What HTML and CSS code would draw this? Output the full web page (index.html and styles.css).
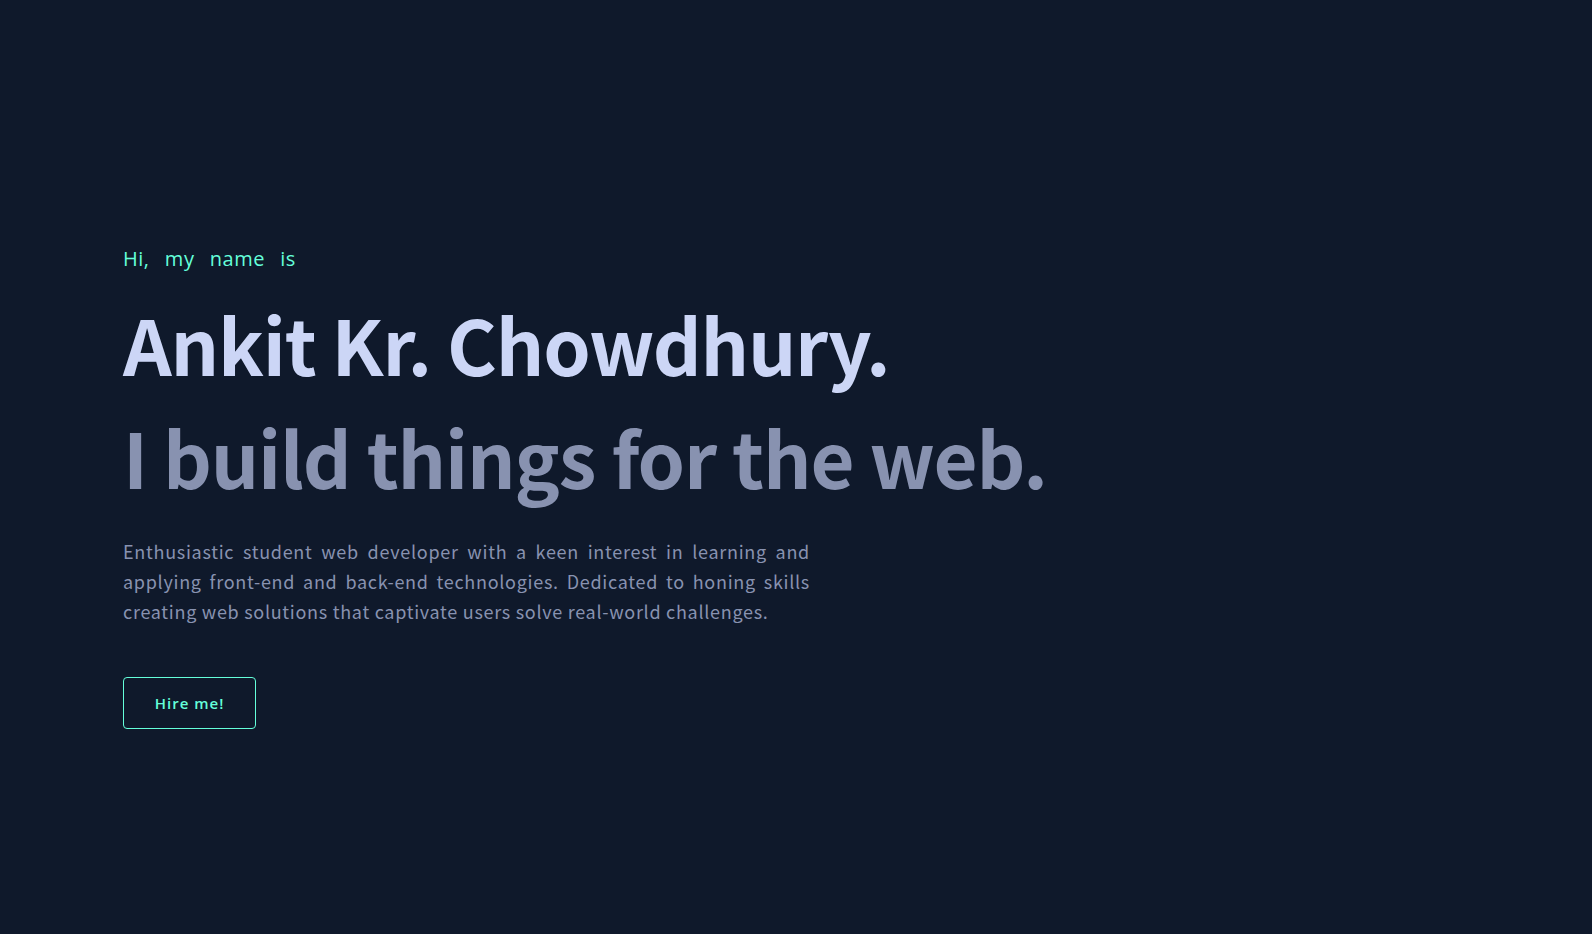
FILE: index.html
```html
<!DOCTYPE html>
<html lang="en">
<head>
<meta charset="utf-8">
<title>Ankit Kr. Chowdhury</title>
<link rel="stylesheet" href="styles.css">
</head>
<body>
<main class="hero">
  <p class="hero-intro">Hi, my name is</p>
  <h1 class="hero-name">Ankit Kr. Chowdhury.</h1>
  <h2 class="hero-tagline">I build things for the web.</h2>
  <p class="hero-text">Enthusiastic student web developer with a keen interest in learning and applying front-end and back-end technologies. Dedicated to honing skills creating web solutions that captivate users solve real-world challenges.</p>
  <a class="hero-button" href="#contact">Hire me!</a>
</main>
</body>
</html>
```

FILE: styles.css
```css
html, body {
  margin: 0;
  padding: 0;
  background: #0f192b;
}

body {
  min-height: 934px;
  font-family: "Noto Sans CJK SC", "Noto Sans", sans-serif;
}

.hero {
  display: flex;
  flex-direction: column;
  align-items: flex-start;
  padding: 244px 123px 0;
}

.hero-intro {
  margin: 0;
  font-family: "Open Sans", "Noto Sans", sans-serif;
  font-size: 20px;
  line-height: 30px;
  color: #64ffda;
  word-spacing: 9.7px;
  letter-spacing: 0.5px;
}

.hero-name {
  margin: 25px 0 0;
  font-size: 76px;
  font-weight: 700;
  line-height: 88px;
  letter-spacing: -1.2px;
  color: #ccd6f6;
}

.hero-tagline {
  margin: 25px 0 0;
  font-size: 76px;
  font-weight: 700;
  line-height: 88px;
  letter-spacing: -1.15px;
  color: #8892b0;
}

.hero-text {
  margin: 36px 0 0;
  max-width: 687px;
  font-size: 18px;
  line-height: 30px;
  letter-spacing: 0.71px;
  text-align: justify;
  color: #8892b0;
}

.hero-button {
  margin-top: 51px;
  display: flex;
  align-items: center;
  justify-content: center;
  width: 133px;
  height: 52px;
  box-sizing: border-box;
  border: 1px solid #64ffda;
  border-radius: 4px;
  font-family: "Open Sans", "Noto Sans", sans-serif;
  font-size: 15px;
  font-weight: 600;
  letter-spacing: 1px;
  color: #64ffda;
  text-decoration: none;
}
```
